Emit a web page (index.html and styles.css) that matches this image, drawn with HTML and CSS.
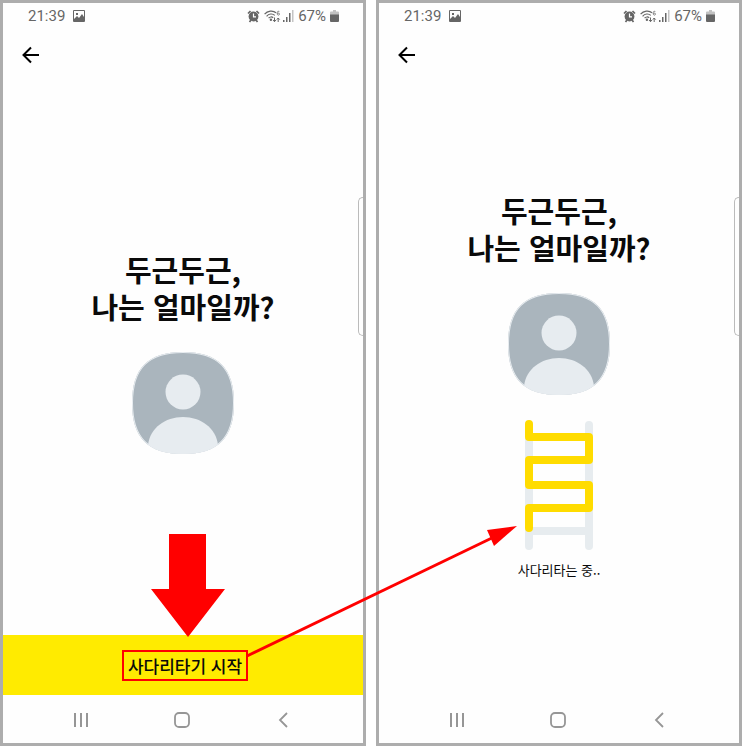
FILE: index.html
```
<!DOCTYPE html>
<html lang="ko">
<head>
  <meta charset="UTF-8" />
  <meta name="viewport" content="width=device-width, initial-scale=1.0" />
  <title>사다리타기</title>
  <link rel="stylesheet" href="styles.css">
</head>
<body>
  <svg class="symbols" aria-hidden="true">
    <symbol id="picture" viewBox="0 0 12 12">
      <path fill="currentColor" fill-rule="evenodd" d="M1 0h10a1 1 0 0 1 1 1v10a1 1 0 0 1-1 1H1a1 1 0 0 1-1-1V1a1 1 0 0 1 1-1zM1 1v8l3-3 2 2 3-4 2 3V1zM3 3h2v2H3z" />
    </symbol>
    <symbol id="alarm" viewBox="0 0 13 13">
      <circle cx="6.500" cy="6.500" r="4.900" fill="currentColor" />
      <path d="M1 3.500 3.500 1M12 3.500 9.500 1M2.500 12l1.500-2M10.500 12 9 10" stroke="currentColor" stroke-width="1.700" />
      <path d="M6.500 3.500v3.300H9" stroke="#fff" stroke-width="1.200" fill="none" />
    </symbol>
    <symbol id="wifi" viewBox="0 0 17 13">
      <g fill="none" stroke="currentColor" stroke-width="1.200">
        <path d="M.6 4.200C3.500.7 9 .2 12 2.800M2.600 6.300c2.200-2.800 6-3 8.200-.9M4.600 8.200c1.200-1.500 3.300-1.600 4.600-.5" />
        <path d="M10.500 7.500v4M9 10l1.500 1.700L12 10M14.200 12V8M12.800 9.600 14.200 8l1.500 1.600" stroke-width="1" />
        <path d="M15.300 1.500c-1.800-.7-2.200.5-2.100 2 0 2.400 2.500 1.800 2.300.4-.2-1.200-1.800-.9-2.200 0" stroke-width=".8" />
      </g>
      <circle cx="6.900" cy="9.800" r="1.200" fill="currentColor" />
    </symbol>
    <symbol id="signal" viewBox="0 0 11 12">
      <path fill="currentColor" d="M0 10h1.500v2H0zM3 7h1.500v5H3zM6 3h1.500v9H6z" />
      <path fill="#c4c4c4" d="M9 0h1.500v12H9z" />
    </symbol>
    <symbol id="battery" viewBox="0 0 9 12">
      <path fill="#c2c2c2" d="M3 0h3v1.500h2a1 1 0 0 1 1 1V5H0V2.500a1 1 0 0 1 1-1h2z" />
      <path fill="currentColor" d="M0 4.500h9V11a1 1 0 0 1-1 1H1a1 1 0 0 1-1-1z" />
    </symbol>
    <symbol id="back" viewBox="0 0 18 18">
      <path d="M17 9H2M9 1.500 1.500 9 9 16.500" fill="none" stroke="currentColor" stroke-width="2" />
    </symbol>
    <symbol id="profile" viewBox="0 0 102 102">
      <clipPath id="profile-shape">
        <path d="M51 0C86 0 102 16 102 51S86 102 51 102 0 86 0 51 16 0 51 0z" />
      </clipPath>
      <g clip-path="url(#profile-shape)">
        <path fill="#aab5bd" d="M0 0h102v102H0z" />
        <circle cx="51" cy="40" r="17.500" fill="#e7ecf0" />
        <path fill="#e7ecf0" d="M16 102V93C18 76 33 65 51 65s33 11 35 28v9z" />
        <path fill="none" stroke="#e7ecf0" stroke-width="2" d="M51 0C86 0 102 16 102 51S86 102 51 102 0 86 0 51 16 0 51 0z" />
      </g>
    </symbol>
    <symbol id="nav-recent" viewBox="0 0 16 16">
      <path d="M2 1v14M8 1v14M14 1v14" stroke="currentColor" stroke-width="2" />
    </symbol>
    <symbol id="nav-home" viewBox="0 0 16 16">
      <rect x="1" y="1" width="14" height="14" rx="4" fill="none" stroke="currentColor" stroke-width="1.800" />
    </symbol>
    <symbol id="nav-back" viewBox="0 0 16 16">
      <path d="M12 1 5 8l7 7" fill="none" stroke="currentColor" stroke-width="1.800" />
    </symbol>
  </svg>

  <main class="guide">
    <section class="phone">
      <div class="status">
        <span>21:39</span>
        <svg class="icon-picture"><use href="#picture" /></svg>
        <div class="status-right">
          <svg class="icon-alarm"><use href="#alarm" /></svg>
          <svg class="icon-wifi"><use href="#wifi" /></svg>
          <svg class="icon-signal"><use href="#signal" /></svg>
          <span class="percent">67%</span>
          <svg class="icon-battery"><use href="#battery" /></svg>
        </div>
      </div>
      <header class="appbar">
        <button class="back-btn" aria-label="뒤로"><svg><use href="#back" /></svg></button>
      </header>
      <div class="content content-start">
        <h1>두근두근,<br>나는 얼마일까?</h1>
        <svg class="profile"><use href="#profile" /></svg>
      </div>
      <button class="start-btn">
        <span class="start-label">사다리타기 시작</span>
        <svg class="arrow-down" viewBox="0 0 74 103" aria-hidden="true">
          <path fill="#ff0000" d="M18 0h37v55h19L37 103 0 55h18z" />
        </svg>
      </button>
      <nav class="navbar">
        <button aria-label="최근 앱"><svg><use href="#nav-recent" /></svg></button>
        <button aria-label="홈"><svg><use href="#nav-home" /></svg></button>
        <button aria-label="이전"><svg><use href="#nav-back" /></svg></button>
      </nav>
      <div class="edge-handle"></div>
    </section>

    <section class="phone">
      <div class="status">
        <span>21:39</span>
        <svg class="icon-picture"><use href="#picture" /></svg>
        <div class="status-right">
          <svg class="icon-alarm"><use href="#alarm" /></svg>
          <svg class="icon-wifi"><use href="#wifi" /></svg>
          <svg class="icon-signal"><use href="#signal" /></svg>
          <span class="percent">67%</span>
          <svg class="icon-battery"><use href="#battery" /></svg>
        </div>
      </div>
      <header class="appbar">
        <button class="back-btn" aria-label="뒤로"><svg><use href="#back" /></svg></button>
      </header>
      <div class="content content-play">
        <h1>두근두근,<br>나는 얼마일까?</h1>
        <svg class="profile"><use href="#profile" /></svg>
        <svg class="ladder" viewBox="0 0 68 130" fill="none" stroke-width="8" stroke-linecap="round" stroke-linejoin="round">
          <path stroke="#e7ecef" d="M4 5v121M64 5v121M4 111h60" />
          <path stroke="#ffdc00" d="M4 4v13h60v23H4v25h60v23H4v20" />
        </svg>
        <p class="progress">사다리타는 중..</p>
      </div>
      <nav class="navbar">
        <button aria-label="최근 앱"><svg><use href="#nav-recent" /></svg></button>
        <button aria-label="홈"><svg><use href="#nav-home" /></svg></button>
        <button aria-label="이전"><svg><use href="#nav-back" /></svg></button>
      </nav>
      <div class="edge-handle"></div>
    </section>

    <!-- arrow from the start button to the ladder -->
    <svg class="connector" viewBox="0 0 742 746" aria-hidden="true">
      <path d="M247 656 496 536" stroke="#ff0000" stroke-width="3" />
      <path fill="#ff0000" d="M517 526 487 530 494 546z" />
    </svg>
  </main>
</body>
</html>
```
FILE: styles.css
```
* {
  box-sizing: border-box;
}

body {
  margin: 0;
  background: #fff;
  color: #0a0a0a;
  font-family: "Noto Sans CJK KR", "Noto Sans", sans-serif;
}

button {
  border: none;
  padding: 0;
  background: none;
  color: inherit;
  font-family: inherit;
  cursor: pointer;
}

svg {
  display: block;
}

.symbols {
  position: absolute;
  width: 0;
  height: 0;
}

.guide {
  position: relative;
  display: grid;
  grid-template-columns: 1fr 1fr;
  gap: 10px;
  min-height: 100vh;
}

.phone {
  position: relative;
  display: flex;
  flex-direction: column;
  border: 3px solid #adadad;
  background: #fefefe;
}

.status {
  display: flex;
  align-items: center;
  height: 26px;
  padding: 0 24px 0 25px;
  gap: 8px;
  color: #666;
  font-family: Roboto, sans-serif;
  font-size: 15px;
}

.status-right {
  display: flex;
  align-items: center;
  gap: 2px;
  margin-left: auto;
}

.percent {
  margin: 0 2px;
}

.icon-picture {
  width: 12px;
  height: 12px;
}

.icon-alarm {
  width: 13px;
  height: 13px;
  margin-right: 2px;
}

.icon-wifi {
  width: 17px;
  height: 13px;
}

.icon-signal {
  width: 11px;
  height: 12px;
}

.icon-battery {
  width: 9px;
  height: 12px;
}

.appbar {
  display: flex;
  align-items: center;
  height: 52px;
  padding: 0 19px;
}

.back-btn {
  color: #000;
}

.back-btn svg {
  width: 18px;
  height: 18px;
}

.content {
  flex: 1;
  display: flex;
  flex-direction: column;
  align-items: center;
}

.content-start {
  padding-top: 170px;
}

.content-play {
  padding-top: 111px;
}

h1 {
  margin: 0;
  font-size: 29px;
  font-weight: 700;
  line-height: 37px;
  text-align: center;
}

.profile {
  width: 102px;
  height: 102px;
  margin-top: 27px;
}

.ladder {
  width: 68px;
  height: 130px;
  margin-top: 25px;
}

.progress {
  margin: 10px 0 0;
  font-size: 13px;
  line-height: 20px;
}

.start-btn {
  position: relative;
  display: flex;
  align-items: center;
  justify-content: center;
  height: 60px;
  background: #ffeb00;
}

.start-label {
  margin-left: 4px;
  padding: 2px 4px;
  border: 2px solid #ff0000;
  font-size: 17px;
  font-weight: 500;
  line-height: 23px;
}

.arrow-down {
  position: absolute;
  left: 50%;
  bottom: 58px;
  width: 74px;
  margin-left: -32px;
}

.navbar {
  display: grid;
  grid-template-columns: repeat(3, 1fr);
  height: 48px;
  padding: 2px 30px 0 28px;
  color: #969696;
}

.navbar button {
  display: flex;
  align-items: center;
  justify-content: center;
}

.navbar svg {
  width: 16px;
  height: 16px;
}

.edge-handle {
  position: absolute;
  top: 194px;
  right: 0;
  width: 5px;
  height: 139px;
  border: 1px solid #bbb;
  border-right: none;
  border-radius: 5px 0 0 5px;
}

.connector {
  position: absolute;
  inset: 0;
  width: 100%;
  height: 100%;
  pointer-events: none;
}
```
